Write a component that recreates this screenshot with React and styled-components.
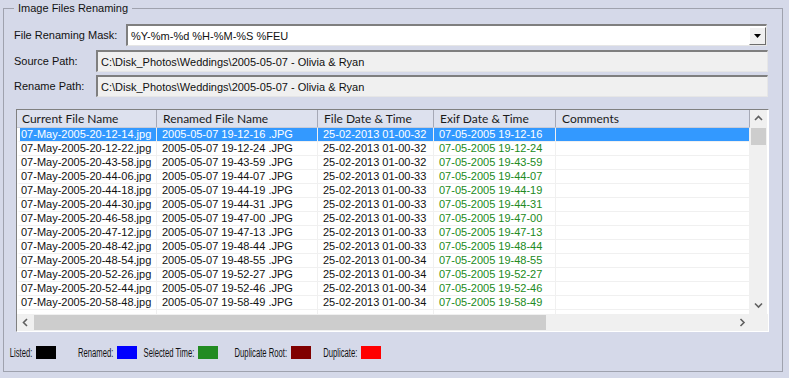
import React from 'react';
import styled, { createGlobalStyle } from 'styled-components';

const GlobalStyle = createGlobalStyle`
  html, body {
    margin: 0;
    padding: 0;
    background: #d5d9e9;
  }
  body {
    font-family: "Liberation Sans", Arial, sans-serif;
    font-size: 11px;
    color: #000;
  }
  #root {
    width: 789px;
    height: 378px;
    overflow: hidden;
  }
`;

const Page = styled.div`
  padding: 8px 0 0 3px;
`;

const Group = styled.div`
  box-sizing: border-box;
  width: 780px;
  height: 364px;
  border: 1px solid #9fa2ae;
  padding: 0 14px 0 10px;
  display: flex;
  flex-direction: column;
`;

const GroupTitle = styled.div`
  align-self: flex-start;
  margin-top: -7px;
  padding: 0 4px;
  height: 13px;
  line-height: 13px;
  background: #d5d9e9;
  color: #111;
`;

const FormRow = styled.div`
  display: flex;
  align-items: center;
  height: 22px;
  margin-top: ${p => p.$top}px;
`;

const Label = styled.div`
  width: ${p => p.$width}px;
  flex-shrink: 0;
  color: #111;
`;

const Field = styled.div`
  box-sizing: border-box;
  flex: 1;
  height: 22px;
  display: flex;
  align-items: center;
  padding-left: 3px;
  margin-right: ${p => (p.$combo ? 1 : 0)}px;
  background: ${p => (p.$combo ? '#fff' : '#f0f0f0')};
  border-style: solid;
  border-width: 2px 1px 1px 2px;
  border-color: #7f7f7f #e6e6e6 #e6e6e6 #7f7f7f;
  color: #111;
`;

const FieldText = styled.span`
  flex: 1;
  white-space: nowrap;
`;

const DropButton = styled.div`
  box-sizing: border-box;
  width: 17px;
  height: 18px;
  background: #f0f0f0;
  border-style: solid;
  border-width: 1px;
  border-color: #fff #6d6d6d #6d6d6d #fff;
  display: flex;
  align-items: center;
  justify-content: center;
`;

const TableFrame = styled.div`
  box-sizing: border-box;
  margin: 12px -1px 0 2px;
  height: 223px;
  border-style: solid;
  border-width: 1px;
  border-color: #808080 #fff #fff #808080;
  display: flex;
  flex-direction: column;
  background: #fff;
`;

const TableMain = styled.div`
  display: flex;
  height: 204px;
`;

const GridArea = styled.div`
  width: 733px;
  display: flex;
  flex-direction: column;
  overflow: hidden;
`;

const HeaderRow = styled.div`
  display: flex;
  height: 18px;
  background: #dde1ee;
  border-bottom: 1px solid #c9ccd8;
  box-sizing: border-box;
`;

const HeaderCell = styled.div`
  box-sizing: border-box;
  width: ${p => p.$w}px;
  flex-shrink: 0;
  padding-left: ${p => p.$pad}px;
  border-right: 1px solid #a6a9b6;
  font-family: Lato, "Open Sans", sans-serif;
  font-size: 12px;
  line-height: 17px;
  color: #1a1a1a;
  white-space: nowrap;
`;

const Body = styled.div`
  flex: 1;
  display: flex;
  flex-direction: column;
`;

const Row = styled.div`
  display: flex;
  height: 14px;
  flex: ${p => (p.$filler ? 1 : 'none')};
`;

const Cell = styled.div`
  box-sizing: border-box;
  width: ${p => p.$w}px;
  flex-shrink: 0;
  padding-left: ${p => p.$pad}px;
  border-right: 1px solid #f0f0f0;
  border-bottom: ${p => (p.$filler ? 'none' : '1px solid #f0f0f0')};
  border-left: ${p => (p.$first ? '3px solid #fff' : 'none')};
  background: ${p => (p.$sel ? '#3399ff' : '#fff')};
  color: ${p => (p.$sel ? '#fff' : p.$green ? '#218a21' : '#111')};
  line-height: 13px;
  white-space: nowrap;
  overflow: hidden;
`;

const VScroll = styled.div`
  width: 17px;
  background: #f0f0f0;
  display: flex;
  flex-direction: column;
`;

const HScroll = styled.div`
  display: flex;
  height: 17px;
  background: #f0f0f0;
`;

const ArrowBox = styled.div`
  width: 17px;
  height: 17px;
  flex-shrink: 0;
  display: flex;
  align-items: center;
  justify-content: center;
`;

const Thumb = styled.div`
  background: #cdcdcd;
  ${p => (p.$vertical
    ? 'height: 17px; margin: 1px 1px 0 1px;'
    : 'width: 512px; margin: 1px 0;')}
`;

const Spacer = styled.div`
  flex: 1;
`;

const LegendRow = styled.div`
  display: flex;
  align-items: center;
  height: 13px;
  margin: 14px 0 0 -4px;
`;

const LegendLabel = styled.div`
  width: ${p => p.$w}px;
  padding-right: 4px;
  box-sizing: content-box;
  display: flex;
  justify-content: flex-end;
  flex-shrink: 0;
`;

const LegendText = styled.span`
  display: inline-block;
  white-space: nowrap;
  font-size: 12px;
  transform: scaleX(0.64);
  transform-origin: right center;
  color: #111;
`;

const Swatch = styled.div`
  width: 20px;
  height: 13px;
  flex-shrink: 0;
  background: ${p => p.$color};
`;

const Chevron = ({ dir }) => {
  const pts = {
    up: '1,5 4.5,1.5 8,5',
    down: '1,1.5 4.5,5 8,1.5',
    left: '5,1 1.5,4.5 5,8',
    right: '1.5,1 5,4.5 1.5,8',
  }[dir];
  const vertical = dir === 'up' || dir === 'down';
  return (
    <svg width={vertical ? 9 : 7} height={vertical ? 7 : 9}>
      <polyline points={pts} fill="none" stroke="#606060" strokeWidth="1.6" />
    </svg>
  );
};

const columns = [
  { key: 'current', title: 'Current File Name', w: 140, hpad: 2, pad: 1 },
  { key: 'renamed', title: 'Renamed File Name', w: 161, hpad: 6, pad: 5 },
  { key: 'fileDate', title: 'File Date & Time', w: 116, hpad: 6, pad: 5 },
  { key: 'exif', title: 'Exif Date & Time', w: 122, hpad: 6, pad: 5 },
  { key: 'comments', title: 'Comments', w: 194, hpad: 6, pad: 5 },
];

const raw = [
  ['20-12-14', '19-12-16', '32'],
  ['20-12-22', '19-12-24', '32'],
  ['20-43-58', '19-43-59', '32'],
  ['20-44-06', '19-44-07', '33'],
  ['20-44-18', '19-44-19', '33'],
  ['20-44-30', '19-44-31', '33'],
  ['20-46-58', '19-47-00', '33'],
  ['20-47-12', '19-47-13', '33'],
  ['20-48-42', '19-48-44', '33'],
  ['20-48-54', '19-48-55', '34'],
  ['20-52-26', '19-52-27', '34'],
  ['20-52-44', '19-52-46', '34'],
  ['20-58-48', '19-58-49', '34'],
];

const rows = raw.map(([cur, ren, sec]) => ({
  current: `07-May-2005-${cur}.jpg`,
  renamed: `2005-05-07 ${ren} .JPG`,
  fileDate: `25-02-2013 01-00-${sec}`,
  exif: `07-05-2005 ${ren}`,
  comments: '',
}));

const legend = [
  { label: 'Listed:', w: 22, color: '#000000' },
  { label: 'Renamed:', w: 57, color: '#0000ff' },
  { label: 'Selected Time:', w: 57, color: '#228b22' },
  { label: 'Duplicate Root:', w: 69, color: '#800000' },
  { label: 'Duplicate:', w: 46, color: '#ff0000' },
];

export default function App() {
  return (
    <Page>
      <GlobalStyle />
      <Group>
        <GroupTitle>Image Files Renaming</GroupTitle>

        <FormRow $top={9}>
          <Label $width={112}>File Renaming Mask:</Label>
          <Field $combo>
            <FieldText>%Y-%m-%d %H-%M-%S %FEU</FieldText>
            <DropButton>
              <svg width="7" height="4">
                <polygon points="0,0 7,0 3.5,4" fill="#000" />
              </svg>
            </DropButton>
          </Field>
        </FormRow>
        <FormRow $top={4}>
          <Label $width={82}>Source Path:</Label>
          <Field>
            <FieldText>C:\Disk_Photos\Weddings\2005-05-07 - Olivia &amp; Ryan</FieldText>
          </Field>
        </FormRow>
        <FormRow $top={3}>
          <Label $width={82}>Rename Path:</Label>
          <Field>
            <FieldText>C:\Disk_Photos\Weddings\2005-05-07 - Olivia &amp; Ryan</FieldText>
          </Field>
        </FormRow>

        <TableFrame>
          <TableMain>
            <GridArea>
              <HeaderRow>
                {columns.map((c, i) => (
                  <HeaderCell key={c.key} $w={c.w} $pad={i === 0 ? 5 : c.hpad}>
                    {c.title}
                  </HeaderCell>
                ))}
              </HeaderRow>
              <Body>
                {rows.map((r, ri) => (
                  <Row key={ri}>
                    {columns.map((c, i) => (
                      <Cell
                        key={c.key}
                        $w={c.w}
                        $pad={c.pad}
                        $first={i === 0}
                        $sel={ri === 0}
                        $green={c.key === 'exif'}
                      >
                        {r[c.key]}
                      </Cell>
                    ))}
                  </Row>
                ))}
                <Row $filler>
                  {columns.map((c, i) => (
                    <Cell key={c.key} $w={c.w} $pad={c.pad} $first={i === 0} $filler />
                  ))}
                </Row>
              </Body>
            </GridArea>
            <VScroll>
              <ArrowBox><Chevron dir="up" /></ArrowBox>
              <Thumb $vertical />
              <Spacer />
              <ArrowBox><Chevron dir="down" /></ArrowBox>
            </VScroll>
          </TableMain>
          <HScroll>
            <ArrowBox><Chevron dir="left" /></ArrowBox>
            <Thumb />
            <Spacer />
            <ArrowBox><Chevron dir="right" /></ArrowBox>
            <ArrowBox />
          </HScroll>
        </TableFrame>

        <LegendRow>
          {legend.map(l => (
            <React.Fragment key={l.label}>
              <LegendLabel $w={l.w}>
                <LegendText>{l.label}</LegendText>
              </LegendLabel>
              <Swatch $color={l.color} />
            </React.Fragment>
          ))}
        </LegendRow>
      </Group>
    </Page>
  );
}
